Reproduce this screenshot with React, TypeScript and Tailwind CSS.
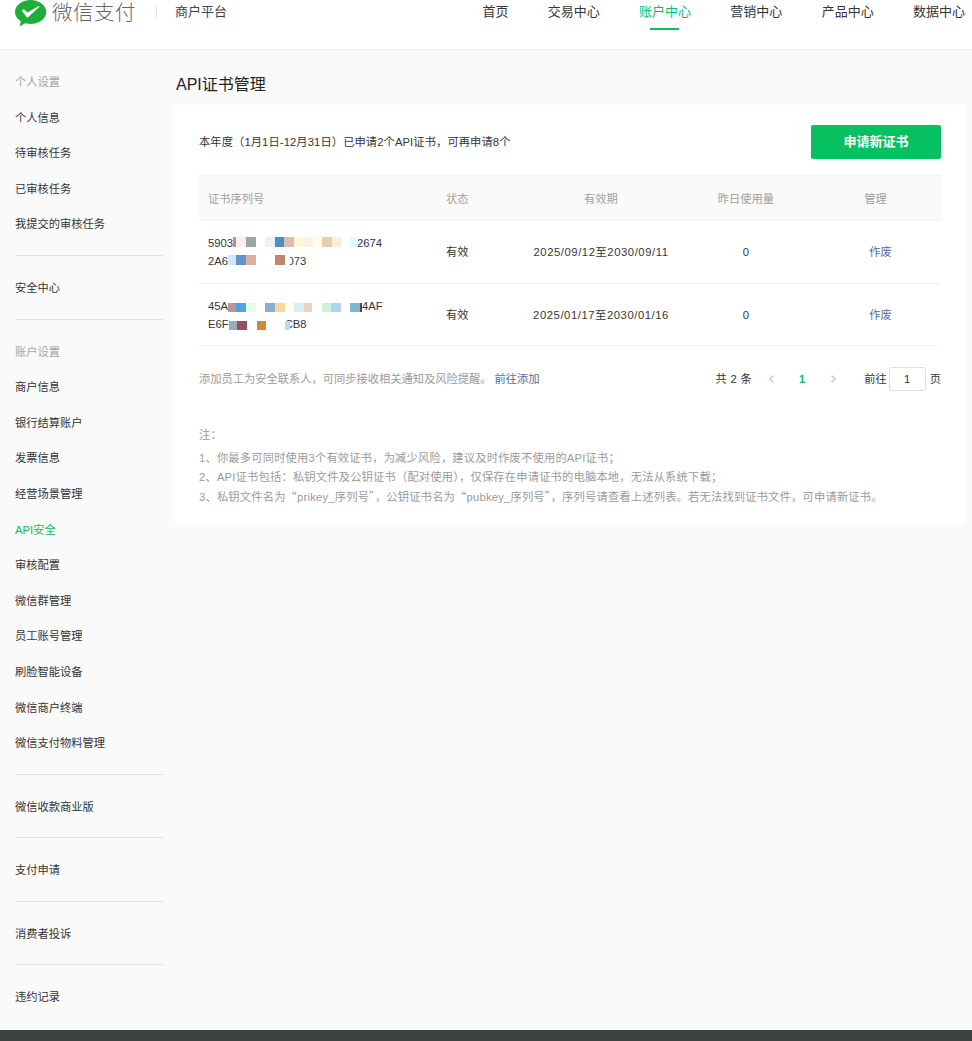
import React from 'react';

const font = { fontFamily: '"Liberation Sans","Noto Sans CJK SC",sans-serif' };

const navItems = ['首页', '交易中心', '账户中心', '营销中心', '产品中心', '数据中心'];

const sideGroups = [
  { title: '个人设置', items: ['个人信息', '待审核任务', '已审核任务', '我提交的审核任务'] },
  { items: ['安全中心'] },
  {
    title: '账户设置',
    items: ['商户信息', '银行结算账户', '发票信息', '经营场景管理', 'API安全', '审核配置', '微信群管理', '员工账号管理', '刷脸智能设备', '微信商户终端', '微信支付物料管理'],
  },
  { items: ['微信收款商业版'] },
  { items: ['支付申请'] },
  { items: ['消费者投诉'] },
  { items: ['违约记录'] },
];

type Swatch = [number, string];
type Serial = { head: string; cells: Swatch[]; tail: string; overlap: number };

// mosaic that hides part of a serial number, it may run over the first digit after it
const Mosaic = ({ cells, overlap, className }: { cells: Swatch[]; overlap: number; className: string }) => (
  <span className={`relative z-10 inline-flex h-[9.5px] ${className}`} style={{ marginRight: -overlap }}>
    {cells.map(([w, c], i) => (
      <span key={i} className="block h-full" style={{ width: w, backgroundColor: c }} />
    ))}
  </span>
);

const rows: { a: Serial; b: Serial; period: string; align: string; serialTop: string }[] = [
  {
    a: {
      head: '5903',
      cells: [[3, '#b98a9a'], [10, '#f8efe6'], [10, '#97a8a0'], [9, '#ffffff'], [10, '#f0f0f7'], [9, '#4c8fc1'], [10, '#dcbdb4'], [10, '#fff6d8'], [9, '#fdf0e6'], [9, '#ffffe8'], [10, '#e3cfb4'], [9, '#ffeed2'], [9, '#fcffff'], [8, '#e3fafd']],
      tail: '2674',
      overlap: 1,
    },
    b: {
      head: '2A6',
      cells: [[8, '#d3e8f7'], [10, '#6193cc'], [10, '#d8b2a0'], [19, '#ffffff'], [10, '#c08671'], [5, '#ffffff']],
      tail: '073',
      overlap: 2.5,
    },
    period: '2025/09/12至2030/09/11',
    align: 'align-[0px]',
    serialTop: '',
  },
  {
    a: {
      head: '45A',
      cells: [[8, '#c09496'], [10, '#4fa3de'], [10, '#e9fde6'], [9, '#ffffff'], [10, '#87add3'], [10, '#fdd49c'], [9, '#fffff0'], [10, '#dcecfb'], [8, '#e5d4c2'], [10, '#ffffff'], [9, '#c9f3e1'], [10, '#b1d2f1'], [9, '#fffdf8'], [10, '#7db8d0'], [2, '#4a4a55']],
      tail: '4AF',
      overlap: 0,
    },
    b: {
      head: 'E6F',
      cells: [[8, '#96adbb'], [10, '#96525a'], [10, '#ffffff'], [9, '#cb8d3a'], [19, '#ffffff'], [5, '#b4dcfb']],
      tail: 'CB8',
      overlap: 5,
    },
    period: '2025/01/17至2030/01/16',
    align: 'align-[-2px]',
    serialTop: 'pt-[2px]',
  },
];

const WechatLogo = () => (
  <svg width="32" height="27" viewBox="0 0 32 27" className="shrink-0">
    <path d="M15.6 0C7 0 0 5.300 0 12c0 3.800 2.300 7.100 5.800 9.300L4.600 26.500l5.600-3.200c1.700.500 3.500.700 5.400.700 8.600 0 15.600-5.400 15.600-12S24.200 0 15.600 0z" fill="#22ac38" />
    <path d="M6.800 10.500l2-1.300 3.700 3.200L23.800 6l.7.800L13 17.300c-.5.400-1.100.300-1.500-.2z" fill="#ffffff" />
  </svg>
);

const Quote = ({ children }: { children: string }) => (
  <span className="[font-family:'Noto_Sans_CJK_SC']">{children}</span>
);

export default function App() {
  return (
    <div className="h-[1041px] overflow-hidden bg-[#fafafa] flex flex-col text-[11.25px] text-[#353535]" style={font}>
      <header className="h-[50px] shrink-0 bg-white border-b border-[#f0f0f0] flex justify-between pl-[15px]">
        <div className="flex items-start">
          <WechatLogo />
          <span className="ml-[5px] text-[20.500px] leading-[25px] text-[#666666] tracking-[0.5px] font-light">微信支付</span>
          <span className="ml-[20px] mt-[5px] w-px h-[14px] bg-[#e5e5e5]" />
          <span className="ml-[18px] text-[13px] leading-[24px] text-[#444444]">商户平台</span>
        </div>
        <nav className="flex gap-[39.300px] mr-[7px]">
          {navItems.map((item) => {
            const active = item === '账户中心';
            return (
              <div key={item} className={`relative h-[30px] text-[13px] leading-[24px] ${active ? 'text-[#07c160]' : 'text-[#353535]'}`}>
                {item}
                {active && <span className="absolute left-[11px] top-[28px] w-[29px] h-[2px] bg-[#07c160]" />}
              </div>
            );
          })}
        </nav>
      </header>

      <div className="flex-1 flex min-h-0">
        <aside className="w-[148px] ml-[15px] shrink-0 pt-[14px]">
          {sideGroups.map((group, i) => (
            <div key={i} className={i === 0 ? 'pb-[13px]' : 'border-t border-[#e0e0e0] pt-[14px] pb-[13px]'}>
              {group.title && <div className="h-[35.6px] leading-[37.6px] text-[#a3a3a3]">{group.title}</div>}
              {group.items.map((item) => (
                <div key={item} className={`h-[35.6px] leading-[37.6px] ${item === 'API安全' ? 'text-[#07c160]' : ''}`}>
                  {item}
                </div>
              ))}
            </div>
          ))}
        </aside>

        <main className="ml-[12px] w-[790px] shrink-0">
          <h1 className="h-[55px] pt-[24px] pl-px text-base leading-[22px] font-normal text-[#222222]">API证书管理</h1>
          <section className="bg-white h-[420px] px-[24px] pt-[20px]">
            <div className="flex justify-between items-center h-[34px]">
              <span className="tracking-[0.1px]">本年度（1月1日-12月31日）已申请2个API证书，可再申请8个</span>
              <button className="w-[130px] h-[34px] bg-[#07c160] rounded-[2px] text-white text-[13px] font-bold">申请新证书</button>
            </div>

            <div className="mt-[16px] w-[742px]">
              <div className="h-[46px] pt-[3px] flex items-center bg-[#fafafa] border-y border-[#f0f0f0] text-[#a0a0a0]">
                <div className="w-[247px] pl-[9px]">证书序列号</div>
                <div className="w-[60px]">状态</div>
                <div className="w-[190px] text-center">有效期</div>
                <div className="w-[100px] text-center">昨日使用量</div>
                <div className="w-[145px] text-center pl-[14px]">管理</div>
              </div>
              {rows.map((row) => (
                <div key={row.period} className="h-[62.500px] flex items-center border-b border-[#f0f0f0]">
                  <div className={`w-[247px] pl-[9px] leading-[18px] whitespace-nowrap ${row.serialTop}`}>
                    <div>{row.a.head}<Mosaic cells={row.a.cells} overlap={row.a.overlap} className={row.align} />{row.a.tail}</div>
                    <div>{row.b.head}<Mosaic cells={row.b.cells} overlap={row.b.overlap} className={row.align} />{row.b.tail}</div>
                  </div>
                  <div className="w-[60px] pt-[2px]">有效</div>
                  <div className="w-[190px] pt-[2px] text-center tracking-[0.57px]">{row.period}</div>
                  <div className="w-[100px] pt-[2px] text-center">0</div>
                  <div className="w-[145px] pt-[2px] text-center pl-[24px] text-[#576b95]">作废</div>
                </div>
              ))}
              <div className="h-[66px] flex items-center justify-between">
                <span className="text-[#9a9a9a]">
                  添加员工为安全联系人，可同步接收相关通知及风险提醒。
                  <span className="ml-[3px] text-[#576b95]">前往添加</span>
                </span>
                <div className="flex items-center">
                  <span className="tracking-[0.3px]">共 2 条</span>
                  <span className="ml-[15px] text-[#c8c9cc]">
                    <svg width="10" height="10" viewBox="0 0 10 10" fill="none" stroke="currentColor" strokeWidth="1.500"><path d="M6.500 1.500L3 5l3.500 3.500" /></svg>
                  </span>
                  <span className="ml-[22px] font-bold text-[#07c160]">1</span>
                  <span className="ml-[23px] text-[#c8c9cc]">
                    <svg width="10" height="10" viewBox="0 0 10 10" fill="none" stroke="currentColor" strokeWidth="1.500"><path d="M3.500 1.500L7 5 3.500 8.500" /></svg>
                  </span>
                  <span className="ml-[26px]">前往</span>
                  <input readOnly value="1" className="ml-[2px] w-[37px] h-[24px] text-center border border-[#e0e0e0] rounded-[2px] outline-none" />
                  <span className="ml-[4px]">页</span>
                </div>
              </div>
            </div>

            <div className="mt-[14px] leading-[19px] tracking-[0.2px] text-[#9a9a9a]">
              <p className="mb-[4px]">注：</p>
              <p>1、你最多可同时使用3个有效证书，为减少风险，建议及时作废不使用的API证书；</p>
              <p>2、API证书包括：私钥文件及公钥证书（配对使用），仅保存在申请证书的电脑本地，无法从系统下载；</p>
              <p>
                3、私钥文件名为<Quote>“</Quote>prikey_序列号<Quote>”</Quote>，公钥证书名为<Quote>“</Quote>pubkey_序列号<Quote>”</Quote>，序列号请查看上述列表。若无法找到证书文件，可申请新证书。
              </p>
            </div>
          </section>
        </main>
      </div>

      <footer className="h-[11px] shrink-0 bg-[#3d4041]" />
    </div>
  );
}
